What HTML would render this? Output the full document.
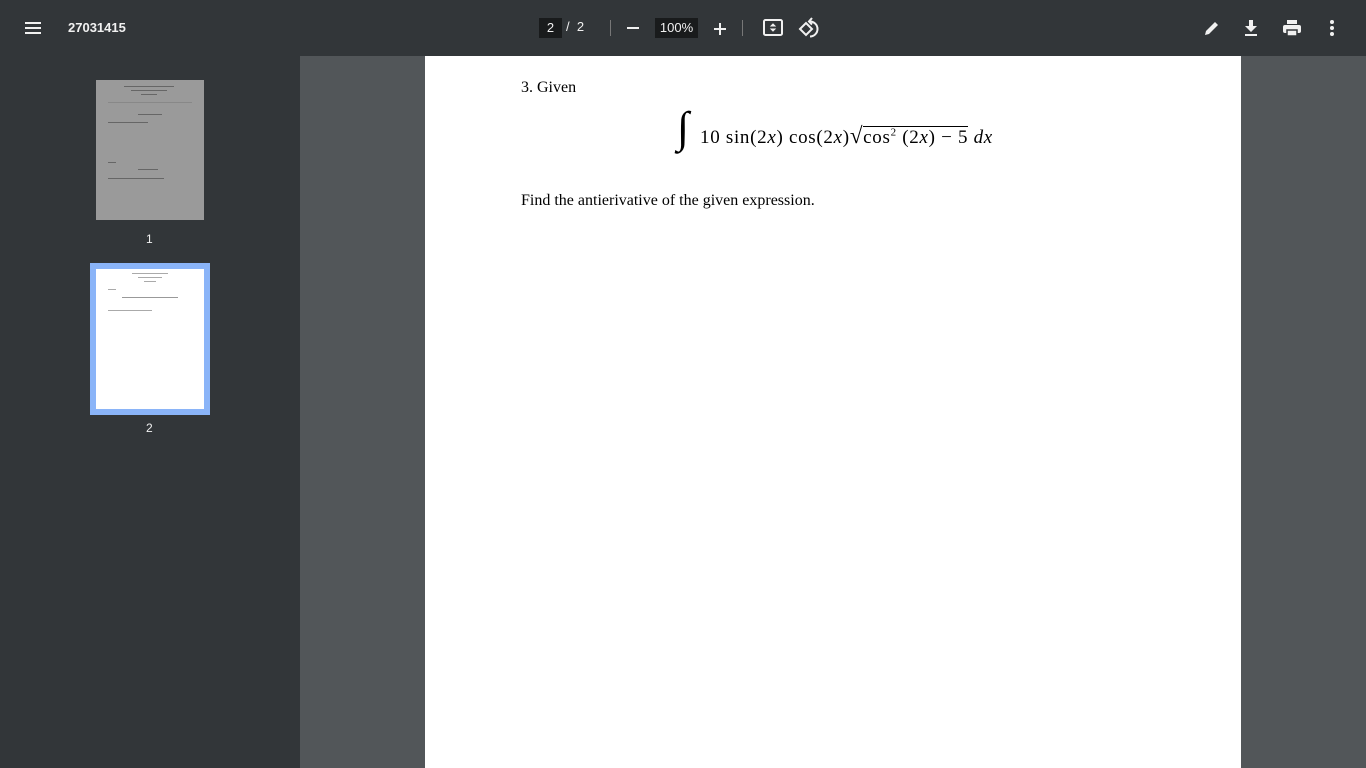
<!DOCTYPE html>
<html><head><style>
body{margin:0;width:1366px;height:768px;overflow:hidden;background:#525659;font-family:"Liberation Sans",sans-serif;position:relative}
.tb{position:absolute;left:0;top:0;width:1366px;height:56px;background:#323639;color:#f1f1f1}
.side{position:absolute;left:0;top:56px;width:300px;height:712px;background:#323639}
.page{position:absolute;left:425px;top:56px;width:816px;height:712px;background:#fff;font-family:"Liberation Serif",serif;color:#000}
.a{position:absolute}
.box{background:#191b1c;color:#f1f1f1;font-size:13px;text-align:center;line-height:20px}
.sep{position:absolute;width:1px;height:16px;background:#777;top:20px}
.l{position:absolute;height:1px;background:#666}
</style></head><body>
<div class="tb">
<svg class="a" style="left:24px;top:19px" width="18" height="18"><path d="M1 4h16M1 9h16M1 14h16" stroke="#f1f1f1" stroke-width="2"/></svg>
<div class="a" style="left:68px;top:20px;font-size:13px;font-weight:bold">27031415</div>
<div class="a box" style="left:539px;top:18px;width:23px">2</div>
<div class="a" style="left:566px;top:19px;font-size:13px">/&nbsp;&nbsp;2</div>
<div class="sep" style="left:610px"></div>
<div class="a" style="left:627px;top:27px;width:12px;height:2px;background:#f1f1f1"></div>
<div class="a box" style="left:655px;top:18px;width:43px">100%</div>
<svg class="a" style="left:713px;top:22px" width="14" height="14"><path d="M7 1v12M1 7h12" stroke="#f1f1f1" stroke-width="2"/></svg>
<div class="sep" style="left:742px"></div>
<svg class="a" style="left:763px;top:19px" width="20" height="18"><rect x="1" y="1" width="18" height="15" rx="1.5" fill="none" stroke="#f1f1f1" stroke-width="2"/><path d="M8 7l2-2 2 2zM8 10l2 2 2-2z" fill="#f1f1f1" stroke="#f1f1f1"/></svg>
<svg class="a" style="left:798px;top:17px" width="22" height="22"><path d="M2 12l6-6 6 6-6 6z" fill="none" stroke="#f1f1f1" stroke-width="2"/><path d="M12 4.5a7.5 7.5 0 1 1 0 15" fill="none" stroke="#f1f1f1" stroke-width="2"/><path d="M14 1l-3 3.5 3 3" fill="none" stroke="#f1f1f1" stroke-width="2"/></svg>
<svg class="a" style="left:1203px;top:19px" width="18" height="18"><path d="M2 16l1-4 9-9 3 3-9 9z" fill="#f1f1f1"/></svg>
<svg class="a" style="left:1244px;top:19px" width="14" height="18"><path d="M5 1h4v6h4l-6 6-6-6h4z" fill="#f1f1f1"/><rect x="1" y="15" width="12" height="2" fill="#f1f1f1"/></svg>
<svg class="a" style="left:1283px;top:19px" width="18" height="18"><rect x="4" y="1" width="10" height="4" fill="#f1f1f1"/><rect x="0" y="6" width="18" height="8" rx="2" fill="#f1f1f1"/><rect x="4" y="11" width="10" height="6" fill="#f1f1f1" stroke="#323639" stroke-width="1.5"/></svg>
<svg class="a" style="left:1329px;top:19px" width="6" height="18"><circle cx="3" cy="3" r="2" fill="#f1f1f1"/><circle cx="3" cy="9" r="2" fill="#f1f1f1"/><circle cx="3" cy="15" r="2" fill="#f1f1f1"/></svg>
</div>
<div class="side">
<div class="a" style="left:96px;top:24px;width:108px;height:140px;background:#9a9a9a">
<div class="l" style="left:28px;top:6px;width:50px"></div><div class="l" style="left:35px;top:10px;width:36px"></div><div class="l" style="left:45px;top:14px;width:16px"></div>
<div class="l" style="left:12px;top:22px;width:84px;background:#888"></div>
<div class="l" style="left:42px;top:34px;width:24px"></div><div class="l" style="left:12px;top:42px;width:40px"></div>
<div class="l" style="left:12px;top:82px;width:8px"></div><div class="l" style="left:42px;top:89px;width:20px"></div>
<div class="l" style="left:12px;top:98px;width:56px"></div>
</div>
<div class="a" style="left:146px;top:176px;font-size:12px;color:#f1f1f1">1</div>
<div class="a" style="left:90px;top:207px;width:108px;height:140px;background:#fff;border:6px solid #8ab4f8">
<div class="l" style="left:36px;top:4px;width:36px;background:#aaa"></div><div class="l" style="left:42px;top:8px;width:24px;background:#aaa"></div><div class="l" style="left:48px;top:12px;width:12px;background:#aaa"></div>
<div class="l" style="left:12px;top:20px;width:8px;background:#aaa"></div><div class="l" style="left:26px;top:28px;width:56px;background:#999"></div>
<div class="l" style="left:12px;top:41px;width:44px;background:#aaa"></div>
</div>
<div class="a" style="left:146px;top:365px;font-size:12px;color:#f1f1f1">2</div>
</div>
<div class="page">
<div class="a" style="left:96px;top:23px;font-size:16px">3. Given</div>
<div class="a" style="left:252px;top:44px;font-size:44px;font-style:italic;line-height:56px">∫</div>
<div class="a" style="left:275px;top:67px;font-size:19px;white-space:nowrap;letter-spacing:0.7px">10 sin(2<i>x</i>) cos(2<i>x</i>)<span style="font-size:23px">√</span><span style="border-top:1px solid #000">cos<sup style="font-size:11px">2</sup> (2<i>x</i>) − 5</span> <i>dx</i></div>
<div class="a" style="left:96px;top:136px;font-size:16px">Find the antierivative of the given expression.</div>
</div>
</body></html>
